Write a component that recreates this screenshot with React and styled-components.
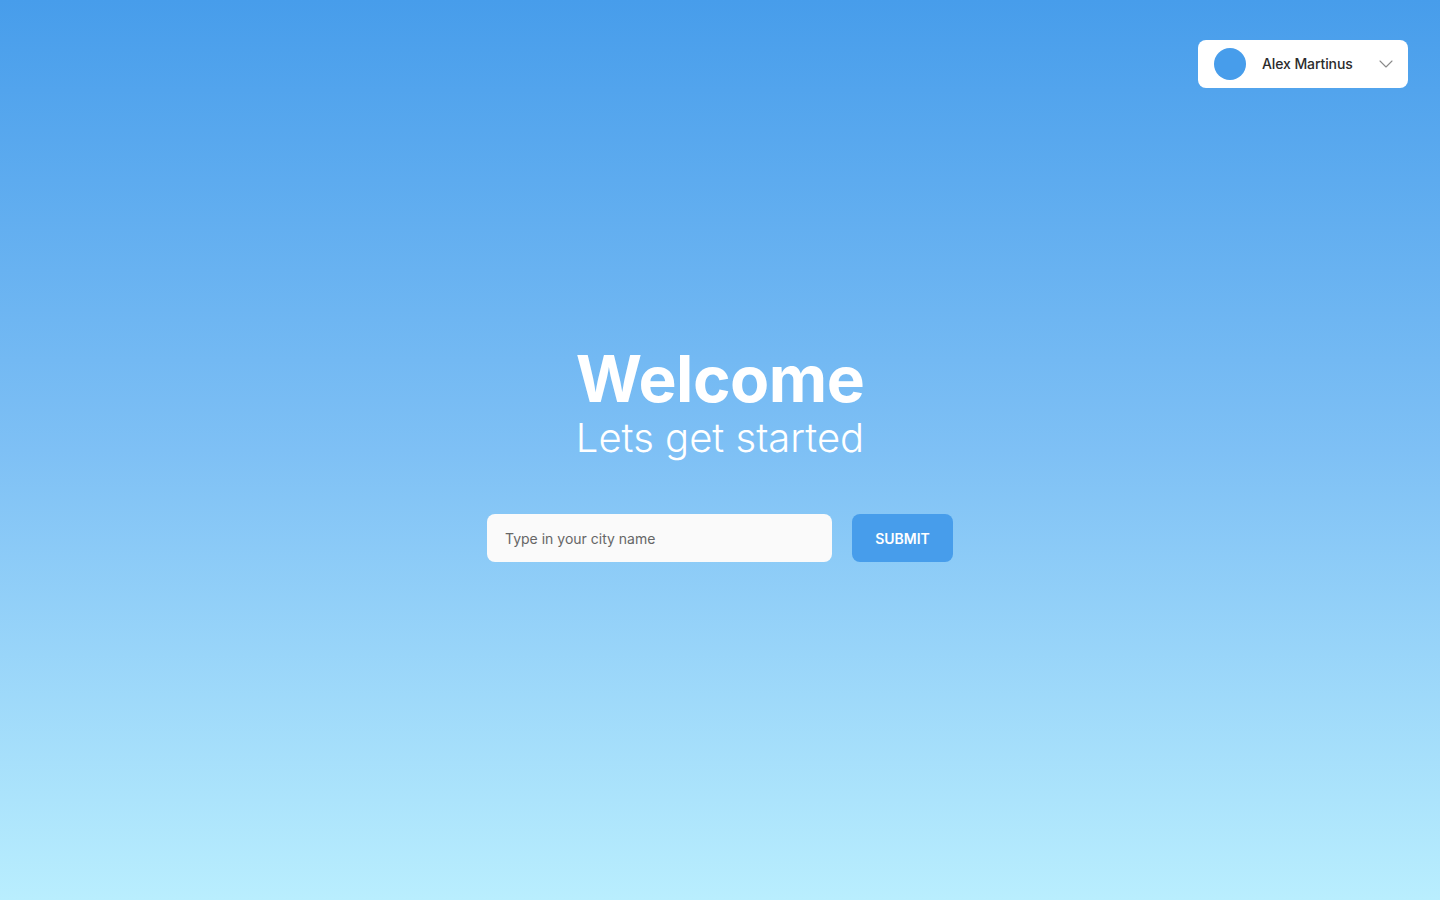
import React from 'react'
import styled, { createGlobalStyle } from 'styled-components'
import { ChevronDown } from 'lucide-react'

const GlobalStyle = createGlobalStyle`
  * { box-sizing: border-box; }
  html, body {
    margin: 0;
    padding: 0;
    font-family: Inter, "Open Sans", "Liberation Sans", sans-serif;
  }
`

const Page = styled.div`
  min-height: 100vh;
  display: flex;
  flex-direction: column;
  background: linear-gradient(180deg, #479deb 0%, #7ec0f5 50%, #b9eefe 100%);
`

const Header = styled.header`
  display: flex;
  justify-content: flex-end;
  padding: 40px 32px 0;
`

const UserCard = styled.div`
  width: 210px;
  height: 48px;
  background: #fff;
  border-radius: 8px;
  display: flex;
  align-items: center;
  padding: 0 16px;
  gap: 16px;
`

const Avatar = styled.div`
  width: 32px;
  height: 32px;
  border-radius: 50%;
  background: #479deb;
  flex-shrink: 0;
`

const UserName = styled.span`
  flex: 1;
  font-size: 14px;
  font-weight: 500;
  color: #2b2b2b;
  letter-spacing: -0.1px;
  margin-top: -2px;
`

const Chevron = styled(ChevronDown)`
  color: #8a8a8a;
  margin-right: -6px;
`

const Main = styled.main`
  flex: 1;
  display: flex;
  flex-direction: column;
  align-items: center;
  justify-content: center;
  padding-bottom: 82px;
`

const Title = styled.h1`
  margin: 0;
  font-size: 64px;
  font-weight: 700;
  line-height: 1.1;
  color: #fff;
  letter-spacing: -0.5px;
`

const Subtitle = styled.p`
  margin: 0;
  font-size: 40px;
  font-weight: 300;
  line-height: 1.2;
  color: #fff;
`

const Form = styled.form`
  margin-top: 52px;
  display: flex;
  gap: 20px;
`

const CityInput = styled.input`
  width: 345px;
  height: 48px;
  border: none;
  border-radius: 8px;
  background: #fafafa;
  padding: 0 18px;
  font-family: inherit;
  font-size: 14px;
  color: #333;
  outline: none;

  &::placeholder {
    color: #666;
  }
`

const SubmitButton = styled.button`
  width: 101px;
  height: 48px;
  border: none;
  border-radius: 8px;
  background: #479deb;
  color: #fff;
  font-family: inherit;
  font-size: 14px;
  font-weight: 600;
  cursor: pointer;
`

export default function App() {
  return (
    <>
      <GlobalStyle />
      <Page>
        <Header>
          <UserCard>
            <Avatar />
            <UserName>Alex Martinus</UserName>
            <Chevron size={24} strokeWidth={1.1} />
          </UserCard>
        </Header>
        <Main>
          <Title>Welcome</Title>
          <Subtitle>Lets get started</Subtitle>
          <Form onSubmit={e => e.preventDefault()}>
            <CityInput placeholder="Type in your city name" />
            <SubmitButton type="submit">SUBMIT</SubmitButton>
          </Form>
        </Main>
      </Page>
    </>
  )
}
